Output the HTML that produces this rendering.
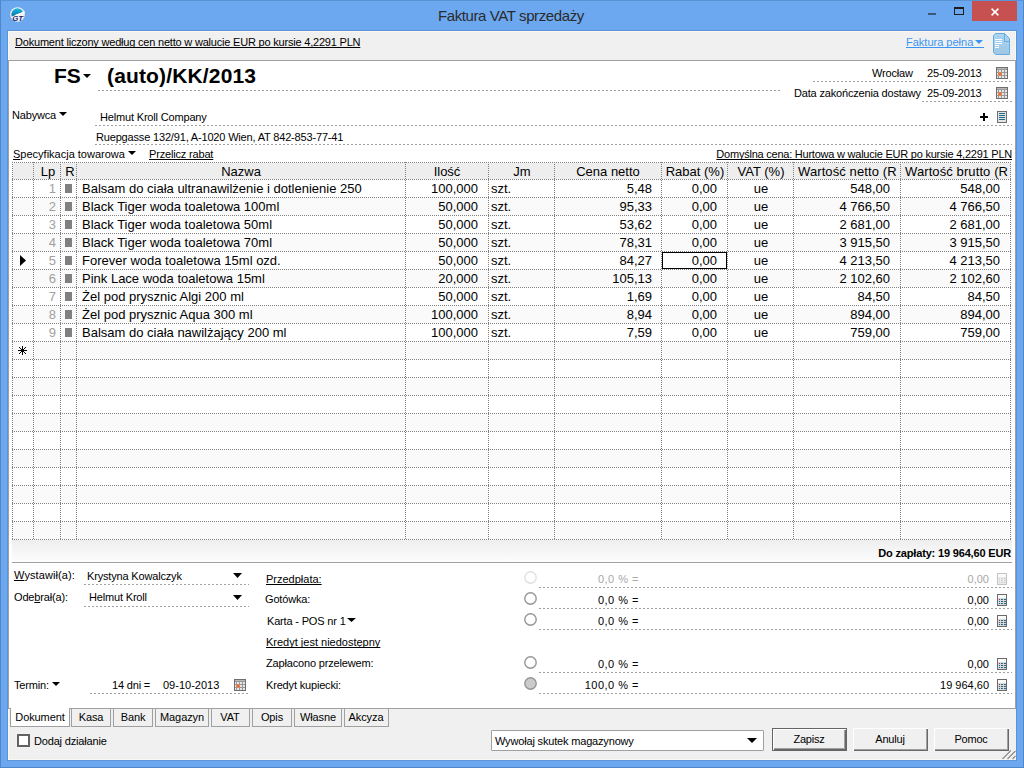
<!DOCTYPE html>
<html><head><meta charset="utf-8"><style>
*{margin:0;padding:0;box-sizing:border-box}
html,body{width:1024px;height:768px;overflow:hidden;background:#6ba8f0;font-family:"Liberation Sans",sans-serif;position:relative;color:#000}
.a{position:absolute;white-space:nowrap}
.s{letter-spacing:-0.17px}
.u{text-decoration:underline;text-decoration-skip-ink:none}
svg{display:block}
</style></head><body>
<div class="a" style="left:0px;top:0px;width:1024px;height:768px;border:1px solid #4f87c8;border-top-color:#5a92d6;"></div>
<div class="a " style="left:438px;top:8px;font-size:15px;line-height:15px;color:#2b2b2b;letter-spacing:-0.4px">Faktura VAT sprzedaży</div>
<svg class="a" style="left:10px;top:7px" width="16" height="15" viewBox="0 0 16 15"><defs><linearGradient id="ig" x1="0" y1="0" x2="0" y2="1"><stop offset="0" stop-color="#1cbce4"/><stop offset="1" stop-color="#0a6fa8"/></linearGradient></defs><circle cx="7.5" cy="7.5" r="7.3" fill="#f6f3ee"/><path d="M1.8 9.5 A5.8 5.8 0 0 1 13 5.2 L5 8.2 Z" fill="url(#ig)"/><path d="M5.5 8.3 L15 4.8" stroke="#fff" stroke-width="1.2"/><text x="2.2" y="13.6" font-family="Liberation Sans" font-weight="bold" font-style="italic" font-size="7.8" fill="#15237a">GT</text></svg>
<div class="a" style="left:928px;top:13px;width:8px;height:2px;background:#3d5878;"></div>
<div class="a" style="left:954px;top:7px;width:10px;height:8px;border:1px solid #1c1c1c;border-top-width:2px;"></div>
<div class="a" style="left:972px;top:1px;width:45px;height:20px;background:#c75050;"></div>
<svg class="a" style="left:991px;top:8px" width="8" height="8"><path d="M0.6 0.6 L7.4 7.4 M7.4 0.6 L0.6 7.4" stroke="#fff" stroke-width="1.5"/></svg>
<div class="a" style="left:7px;top:30px;width:1010px;height:731px;background:#f0f0f0;border:1px solid #5b94d8;"></div>
<div class="a" style="left:8px;top:31px;width:1008px;height:1px;background:#fbf8f3;"></div>
<div class="a" style="left:8px;top:31px;width:1px;height:30px;background:#fbf8f3;"></div>
<div class="a" style="left:1015px;top:31px;width:1px;height:30px;background:#fbf8f3;"></div>
<div class="a" style="left:8px;top:60px;width:1008px;height:1px;background:#a0a0a0;"></div>
<div class="a" style="left:8px;top:61px;width:1008px;height:647px;background:#fff;border-left:1px solid #a0a0a0;border-right:1px solid #a0a0a0;"></div>
<div class="a" style="left:8px;top:708px;width:1px;height:51px;background:#fbf8f3;"></div>
<div class="a" style="left:8px;top:759px;width:1008px;height:1px;background:#fbf8f3;"></div>
<div class="a u" style="left:15px;top:37px;font-size:11px;line-height:11px;letter-spacing:-0.2px">Dokument liczony według cen netto w walucie EUR po kursie 4,2291 PLN</div>
<div class="a " style="left:906px;top:37px;font-size:11px;line-height:11px;color:#3a95f2;letter-spacing:-0.0px">Faktura pełna</div>
<svg class="a" style="left:975px;top:40px" width="8" height="4"><polygon points="0,0 8,0 4.0,4" fill="#3a95f2"/></svg>
<div class="a" style="left:906px;top:47px;width:78px;height:1px;background:#3a95f2;"></div>
<svg class="a" style="left:993px;top:33px" width="17" height="22" viewBox="0 0 17 22"><defs><linearGradient id="dg" x1="0" y1="0" x2="0" y2="1"><stop offset="0" stop-color="#a8d6f4"/><stop offset="1" stop-color="#a0c6e2"/></linearGradient></defs><path d="M2.5 0.5 H11.5 L16.5 5.5 V21.5 H2.5 L0.5 19.5 V2.5 Z" fill="url(#dg)" stroke="#68ace0" stroke-width="1"/><path d="M11.5 0.5 V8.5 H16.5" fill="none" stroke="#68ace0" stroke-width="1"/><g fill="#fff"><rect x="2" y="6" width="7" height="1"/><rect x="2" y="8" width="7" height="1"/><rect x="2" y="10" width="7" height="1"/><rect x="2" y="12" width="4" height="1"/><rect x="2" y="14" width="4" height="1"/></g></svg>
<div class="a " style="left:54px;top:65px;font-size:21px;line-height:21px;font-weight:bold">FS</div>
<svg class="a" style="left:83px;top:74px" width="8" height="4"><polygon points="0,0 8,0 4.0,4" fill="#000"/></svg>
<div class="a " style="left:107px;top:65px;font-size:21px;line-height:21px;font-weight:bold;letter-spacing:0.15px">(auto)/KK/2013</div>
<svg class="a" style="left:98px;top:90px" width="683" height="1"><line x1="0" y1="0.5" x2="683" y2="0.5" stroke="#a0a0a0" stroke-width="1" stroke-dasharray="2 2"/></svg>
<div class="a s" style="left:872px;top:68px;font-size:11px;line-height:11px;">Wrocław</div>
<div class="a s" style="left:927px;top:68px;font-size:11px;line-height:11px;">25-09-2013</div>
<svg class="a" style="left:813px;top:81px" width="199" height="1"><line x1="0" y1="0.5" x2="199" y2="0.5" stroke="#a0a0a0" stroke-width="1" stroke-dasharray="2 2"/></svg>
<div class="a s" style="left:794px;top:88px;font-size:11px;line-height:11px;">Data zakończenia dostawy</div>
<div class="a s" style="left:927px;top:88px;font-size:11px;line-height:11px;">25-09-2013</div>
<svg class="a" style="left:922px;top:101px" width="90" height="1"><line x1="0" y1="0.5" x2="90" y2="0.5" stroke="#a0a0a0" stroke-width="1" stroke-dasharray="2 2"/></svg>
<svg class="a" style="left:996px;top:67px" width="12" height="12" viewBox="0 0 12 12"><rect x="0" y="0" width="12" height="12" fill="#6e6e6e"/><rect x="1" y="1" width="10" height="10" fill="#989898"/><rect x="1" y="1" width="10" height="1" fill="#b8b8b8"/><rect x="1" y="3" width="1" height="2" fill="#e6e6e6"/><rect x="3" y="3" width="2" height="2" fill="#e6e6e6"/><rect x="6" y="3" width="2" height="2" fill="#e6e6e6"/><rect x="9" y="3" width="2" height="2" fill="#e6e6e6"/><rect x="1" y="6" width="1" height="2" fill="#e6e6e6"/><rect x="3" y="6" width="2" height="2" fill="#e6e6e6"/><rect x="6" y="6" width="2" height="2" fill="#e6e6e6"/><rect x="9" y="6" width="2" height="2" fill="#e6e6e6"/><rect x="1" y="9" width="1" height="2" fill="#e6e6e6"/><rect x="3" y="9" width="2" height="2" fill="#e6e6e6"/><rect x="6" y="9" width="2" height="2" fill="#e6e6e6"/><rect x="9" y="9" width="2" height="2" fill="#e6e6e6"/><rect x="2" y="5" width="4" height="4" fill="#d08a6c"/><rect x="3" y="6" width="2" height="2" fill="#f26a30"/></svg>
<svg class="a" style="left:996px;top:87px" width="12" height="12" viewBox="0 0 12 12"><rect x="0" y="0" width="12" height="12" fill="#6e6e6e"/><rect x="1" y="1" width="10" height="10" fill="#989898"/><rect x="1" y="1" width="10" height="1" fill="#b8b8b8"/><rect x="1" y="3" width="1" height="2" fill="#e6e6e6"/><rect x="3" y="3" width="2" height="2" fill="#e6e6e6"/><rect x="6" y="3" width="2" height="2" fill="#e6e6e6"/><rect x="9" y="3" width="2" height="2" fill="#e6e6e6"/><rect x="1" y="6" width="1" height="2" fill="#e6e6e6"/><rect x="3" y="6" width="2" height="2" fill="#e6e6e6"/><rect x="6" y="6" width="2" height="2" fill="#e6e6e6"/><rect x="9" y="6" width="2" height="2" fill="#e6e6e6"/><rect x="1" y="9" width="1" height="2" fill="#e6e6e6"/><rect x="3" y="9" width="2" height="2" fill="#e6e6e6"/><rect x="6" y="9" width="2" height="2" fill="#e6e6e6"/><rect x="9" y="9" width="2" height="2" fill="#e6e6e6"/><rect x="2" y="5" width="4" height="4" fill="#d08a6c"/><rect x="3" y="6" width="2" height="2" fill="#f26a30"/></svg>
<div class="a s" style="left:12px;top:110px;font-size:11px;line-height:11px;">Nabywca</div>
<svg class="a" style="left:59px;top:112px" width="8" height="4"><polygon points="0,0 8,0 4.0,4" fill="#000"/></svg>
<div class="a s" style="left:100px;top:112px;font-size:11px;line-height:11px;">Helmut Kroll Company</div>
<svg class="a" style="left:95px;top:125px" width="917" height="1"><line x1="0" y1="0.5" x2="917" y2="0.5" stroke="#a0a0a0" stroke-width="1" stroke-dasharray="2 2"/></svg>
<div class="a s" style="left:96px;top:132px;font-size:11px;line-height:11px;">Ruepgasse 132/91, A-1020 Wien, AT 842-853-77-41</div>
<svg class="a" style="left:95px;top:144px" width="917" height="1"><line x1="0" y1="0.5" x2="917" y2="0.5" stroke="#a0a0a0" stroke-width="1" stroke-dasharray="2 2"/></svg>
<div class="a" style="left:980px;top:116px;width:8px;height:2px;background:#000;"></div>
<div class="a" style="left:983px;top:113px;width:2px;height:8px;background:#000;"></div>
<svg class="a" style="left:997px;top:111px" width="10" height="12" viewBox="0 0 10 12"><rect x="0.5" y="0.5" width="9" height="11" fill="#e4e4e4" stroke="#6e6e6e"/><g fill="#1f6a8c"><rect x="2" y="2" width="6" height="1"/><rect x="2" y="4" width="6" height="1"/><rect x="2" y="6" width="6" height="1"/><rect x="2" y="8" width="6" height="1"/></g></svg>
<div class="a " style="left:13px;top:149px;font-size:11px;line-height:11px;letter-spacing:0px"><span class="u">S</span>pecyfikacja towarowa</div>
<svg class="a" style="left:128px;top:151px" width="8" height="4"><polygon points="0,0 8,0 4.0,4" fill="#000"/></svg>
<div class="a s u" style="left:149px;top:149px;font-size:11px;line-height:11px;">Przelicz rabat</div>
<div class="a u" style="right:12px;top:149px;font-size:11px;line-height:11px;text-align:right;letter-spacing:-0.23px">Domyślna cena: Hurtowa w walucie EUR po kursie 4,2291 PLN</div>
<div class="a" style="left:13px;top:163px;width:998px;height:16px;background:#eeeeee;"></div>
<div class="a" style="left:13px;top:198px;width:998px;height:17px;background:#fafafa;"></div>
<div class="a" style="left:13px;top:234px;width:998px;height:17px;background:#fafafa;"></div>
<div class="a" style="left:13px;top:270px;width:998px;height:17px;background:#fafafa;"></div>
<div class="a" style="left:13px;top:306px;width:998px;height:17px;background:#fafafa;"></div>
<div class="a" style="left:13px;top:342px;width:998px;height:17px;background:#fafafa;"></div>
<div class="a" style="left:13px;top:378px;width:998px;height:17px;background:#fafafa;"></div>
<div class="a" style="left:13px;top:414px;width:998px;height:17px;background:#fafafa;"></div>
<div class="a" style="left:13px;top:450px;width:998px;height:17px;background:#fafafa;"></div>
<div class="a" style="left:13px;top:486px;width:998px;height:17px;background:#fafafa;"></div>
<div class="a" style="left:13px;top:522px;width:998px;height:17px;background:#fafafa;"></div>
<svg class="a" style="left:12px;top:179px" width="999" height="1"><line x1="0" y1="0.5" x2="999" y2="0.5" stroke="#808080" stroke-width="1" stroke-dasharray="1 1"/></svg>
<svg class="a" style="left:12px;top:197px" width="999" height="1"><line x1="0" y1="0.5" x2="999" y2="0.5" stroke="#808080" stroke-width="1" stroke-dasharray="1 1"/></svg>
<svg class="a" style="left:12px;top:215px" width="999" height="1"><line x1="0" y1="0.5" x2="999" y2="0.5" stroke="#808080" stroke-width="1" stroke-dasharray="1 1"/></svg>
<svg class="a" style="left:12px;top:233px" width="999" height="1"><line x1="0" y1="0.5" x2="999" y2="0.5" stroke="#808080" stroke-width="1" stroke-dasharray="1 1"/></svg>
<svg class="a" style="left:12px;top:251px" width="999" height="1"><line x1="0" y1="0.5" x2="999" y2="0.5" stroke="#808080" stroke-width="1" stroke-dasharray="1 1"/></svg>
<svg class="a" style="left:12px;top:269px" width="999" height="1"><line x1="0" y1="0.5" x2="999" y2="0.5" stroke="#808080" stroke-width="1" stroke-dasharray="1 1"/></svg>
<svg class="a" style="left:12px;top:287px" width="999" height="1"><line x1="0" y1="0.5" x2="999" y2="0.5" stroke="#808080" stroke-width="1" stroke-dasharray="1 1"/></svg>
<svg class="a" style="left:12px;top:305px" width="999" height="1"><line x1="0" y1="0.5" x2="999" y2="0.5" stroke="#808080" stroke-width="1" stroke-dasharray="1 1"/></svg>
<svg class="a" style="left:12px;top:323px" width="999" height="1"><line x1="0" y1="0.5" x2="999" y2="0.5" stroke="#808080" stroke-width="1" stroke-dasharray="1 1"/></svg>
<svg class="a" style="left:12px;top:341px" width="999" height="1"><line x1="0" y1="0.5" x2="999" y2="0.5" stroke="#808080" stroke-width="1" stroke-dasharray="1 1"/></svg>
<svg class="a" style="left:12px;top:359px" width="999" height="1"><line x1="0" y1="0.5" x2="999" y2="0.5" stroke="#808080" stroke-width="1" stroke-dasharray="1 1"/></svg>
<svg class="a" style="left:12px;top:377px" width="999" height="1"><line x1="0" y1="0.5" x2="999" y2="0.5" stroke="#808080" stroke-width="1" stroke-dasharray="1 1"/></svg>
<svg class="a" style="left:12px;top:395px" width="999" height="1"><line x1="0" y1="0.5" x2="999" y2="0.5" stroke="#808080" stroke-width="1" stroke-dasharray="1 1"/></svg>
<svg class="a" style="left:12px;top:413px" width="999" height="1"><line x1="0" y1="0.5" x2="999" y2="0.5" stroke="#808080" stroke-width="1" stroke-dasharray="1 1"/></svg>
<svg class="a" style="left:12px;top:431px" width="999" height="1"><line x1="0" y1="0.5" x2="999" y2="0.5" stroke="#808080" stroke-width="1" stroke-dasharray="1 1"/></svg>
<svg class="a" style="left:12px;top:449px" width="999" height="1"><line x1="0" y1="0.5" x2="999" y2="0.5" stroke="#808080" stroke-width="1" stroke-dasharray="1 1"/></svg>
<svg class="a" style="left:12px;top:467px" width="999" height="1"><line x1="0" y1="0.5" x2="999" y2="0.5" stroke="#808080" stroke-width="1" stroke-dasharray="1 1"/></svg>
<svg class="a" style="left:12px;top:485px" width="999" height="1"><line x1="0" y1="0.5" x2="999" y2="0.5" stroke="#808080" stroke-width="1" stroke-dasharray="1 1"/></svg>
<svg class="a" style="left:12px;top:503px" width="999" height="1"><line x1="0" y1="0.5" x2="999" y2="0.5" stroke="#808080" stroke-width="1" stroke-dasharray="1 1"/></svg>
<svg class="a" style="left:12px;top:521px" width="999" height="1"><line x1="0" y1="0.5" x2="999" y2="0.5" stroke="#808080" stroke-width="1" stroke-dasharray="1 1"/></svg>
<svg class="a" style="left:12px;top:539px" width="999" height="1"><line x1="0" y1="0.5" x2="999" y2="0.5" stroke="#808080" stroke-width="1" stroke-dasharray="1 1"/></svg>
<svg class="a" style="left:12px;top:162px" width="999" height="1"><line x1="0" y1="0.5" x2="999" y2="0.5" stroke="#808080" stroke-width="1" stroke-dasharray="1 1"/></svg>
<svg class="a" style="left:12px;top:162px" width="1" height="378"><line x1="0.5" y1="0" x2="0.5" y2="378" stroke="#808080" stroke-width="1" stroke-dasharray="1 1"/></svg>
<svg class="a" style="left:33px;top:162px" width="1" height="378"><line x1="0.5" y1="0" x2="0.5" y2="378" stroke="#808080" stroke-width="1" stroke-dasharray="1 1"/></svg>
<svg class="a" style="left:60px;top:162px" width="1" height="378"><line x1="0.5" y1="0" x2="0.5" y2="378" stroke="#808080" stroke-width="1" stroke-dasharray="1 1"/></svg>
<svg class="a" style="left:76px;top:162px" width="1" height="378"><line x1="0.5" y1="0" x2="0.5" y2="378" stroke="#808080" stroke-width="1" stroke-dasharray="1 1"/></svg>
<svg class="a" style="left:405px;top:162px" width="1" height="378"><line x1="0.5" y1="0" x2="0.5" y2="378" stroke="#808080" stroke-width="1" stroke-dasharray="1 1"/></svg>
<svg class="a" style="left:488px;top:162px" width="1" height="378"><line x1="0.5" y1="0" x2="0.5" y2="378" stroke="#808080" stroke-width="1" stroke-dasharray="1 1"/></svg>
<svg class="a" style="left:554px;top:162px" width="1" height="378"><line x1="0.5" y1="0" x2="0.5" y2="378" stroke="#808080" stroke-width="1" stroke-dasharray="1 1"/></svg>
<svg class="a" style="left:661px;top:162px" width="1" height="378"><line x1="0.5" y1="0" x2="0.5" y2="378" stroke="#808080" stroke-width="1" stroke-dasharray="1 1"/></svg>
<svg class="a" style="left:727px;top:162px" width="1" height="378"><line x1="0.5" y1="0" x2="0.5" y2="378" stroke="#808080" stroke-width="1" stroke-dasharray="1 1"/></svg>
<svg class="a" style="left:793px;top:162px" width="1" height="378"><line x1="0.5" y1="0" x2="0.5" y2="378" stroke="#808080" stroke-width="1" stroke-dasharray="1 1"/></svg>
<svg class="a" style="left:900px;top:162px" width="1" height="378"><line x1="0.5" y1="0" x2="0.5" y2="378" stroke="#808080" stroke-width="1" stroke-dasharray="1 1"/></svg>
<svg class="a" style="left:1010px;top:162px" width="1" height="378"><line x1="0.5" y1="0" x2="0.5" y2="378" stroke="#808080" stroke-width="1" stroke-dasharray="1 1"/></svg>
<div class="a " style="left:-152px;width:400px;top:165px;font-size:13px;line-height:13px;text-align:center;">Lp</div>
<div class="a " style="left:-130px;width:400px;top:165px;font-size:13px;line-height:13px;text-align:center;">R</div>
<div class="a " style="left:41px;width:400px;top:165px;font-size:13px;line-height:13px;text-align:center;">Nazwa</div>
<div class="a " style="left:247px;width:400px;top:165px;font-size:13px;line-height:13px;text-align:center;">Ilość</div>
<div class="a " style="left:322px;width:400px;top:165px;font-size:13px;line-height:13px;text-align:center;">Jm</div>
<div class="a " style="left:408px;width:400px;top:165px;font-size:13px;line-height:13px;text-align:center;">Cena netto</div>
<div class="a " style="left:495px;width:400px;top:165px;font-size:13px;line-height:13px;text-align:center;">Rabat (%)</div>
<div class="a " style="left:561px;width:400px;top:165px;font-size:13px;line-height:13px;text-align:center;">VAT (%)</div>
<div class="a " style="left:798px;top:165px;font-size:13px;line-height:13px;letter-spacing:0.1px">Wartość netto (R</div>
<div class="a " style="left:905px;top:165px;font-size:13px;line-height:13px;letter-spacing:0.1px">Wartość brutto (R</div>
<div class="a " style="right:968px;top:182px;font-size:13px;line-height:13px;text-align:right;color:#a0a0a0">1</div>
<div class="a" style="left:65px;top:184px;width:7px;height:9px;background:#808080;"></div>
<div class="a " style="left:82px;top:182px;font-size:13px;line-height:13px;">Balsam do ciała ultranawilżenie i dotlenienie 250</div>
<div class="a " style="right:546px;top:182px;font-size:13px;line-height:13px;text-align:right;">100,000</div>
<div class="a " style="left:491px;top:182px;font-size:13px;line-height:13px;">szt.</div>
<div class="a " style="right:372px;top:182px;font-size:13px;line-height:13px;text-align:right;">5,48</div>
<div class="a " style="right:307px;top:182px;font-size:13px;line-height:13px;text-align:right;">0,00</div>
<div class="a " style="left:561px;width:400px;top:182px;font-size:13px;line-height:13px;text-align:center;">ue</div>
<div class="a " style="right:134px;top:182px;font-size:13px;line-height:13px;text-align:right;">548,00</div>
<div class="a " style="right:24px;top:182px;font-size:13px;line-height:13px;text-align:right;">548,00</div>
<div class="a " style="right:968px;top:200px;font-size:13px;line-height:13px;text-align:right;color:#a0a0a0">2</div>
<div class="a" style="left:65px;top:202px;width:7px;height:9px;background:#808080;"></div>
<div class="a " style="left:82px;top:200px;font-size:13px;line-height:13px;">Black Tiger woda toaletowa 100ml</div>
<div class="a " style="right:546px;top:200px;font-size:13px;line-height:13px;text-align:right;">50,000</div>
<div class="a " style="left:491px;top:200px;font-size:13px;line-height:13px;">szt.</div>
<div class="a " style="right:372px;top:200px;font-size:13px;line-height:13px;text-align:right;">95,33</div>
<div class="a " style="right:307px;top:200px;font-size:13px;line-height:13px;text-align:right;">0,00</div>
<div class="a " style="left:561px;width:400px;top:200px;font-size:13px;line-height:13px;text-align:center;">ue</div>
<div class="a " style="right:134px;top:200px;font-size:13px;line-height:13px;text-align:right;">4 766,50</div>
<div class="a " style="right:24px;top:200px;font-size:13px;line-height:13px;text-align:right;">4 766,50</div>
<div class="a " style="right:968px;top:218px;font-size:13px;line-height:13px;text-align:right;color:#a0a0a0">3</div>
<div class="a" style="left:65px;top:220px;width:7px;height:9px;background:#808080;"></div>
<div class="a " style="left:82px;top:218px;font-size:13px;line-height:13px;">Black Tiger woda toaletowa 50ml</div>
<div class="a " style="right:546px;top:218px;font-size:13px;line-height:13px;text-align:right;">50,000</div>
<div class="a " style="left:491px;top:218px;font-size:13px;line-height:13px;">szt.</div>
<div class="a " style="right:372px;top:218px;font-size:13px;line-height:13px;text-align:right;">53,62</div>
<div class="a " style="right:307px;top:218px;font-size:13px;line-height:13px;text-align:right;">0,00</div>
<div class="a " style="left:561px;width:400px;top:218px;font-size:13px;line-height:13px;text-align:center;">ue</div>
<div class="a " style="right:134px;top:218px;font-size:13px;line-height:13px;text-align:right;">2 681,00</div>
<div class="a " style="right:24px;top:218px;font-size:13px;line-height:13px;text-align:right;">2 681,00</div>
<div class="a " style="right:968px;top:236px;font-size:13px;line-height:13px;text-align:right;color:#a0a0a0">4</div>
<div class="a" style="left:65px;top:238px;width:7px;height:9px;background:#808080;"></div>
<div class="a " style="left:82px;top:236px;font-size:13px;line-height:13px;">Black Tiger woda toaletowa 70ml</div>
<div class="a " style="right:546px;top:236px;font-size:13px;line-height:13px;text-align:right;">50,000</div>
<div class="a " style="left:491px;top:236px;font-size:13px;line-height:13px;">szt.</div>
<div class="a " style="right:372px;top:236px;font-size:13px;line-height:13px;text-align:right;">78,31</div>
<div class="a " style="right:307px;top:236px;font-size:13px;line-height:13px;text-align:right;">0,00</div>
<div class="a " style="left:561px;width:400px;top:236px;font-size:13px;line-height:13px;text-align:center;">ue</div>
<div class="a " style="right:134px;top:236px;font-size:13px;line-height:13px;text-align:right;">3 915,50</div>
<div class="a " style="right:24px;top:236px;font-size:13px;line-height:13px;text-align:right;">3 915,50</div>
<div class="a " style="right:968px;top:254px;font-size:13px;line-height:13px;text-align:right;color:#a0a0a0">5</div>
<div class="a" style="left:65px;top:256px;width:7px;height:9px;background:#808080;"></div>
<div class="a " style="left:82px;top:254px;font-size:13px;line-height:13px;">Forever woda toaletowa 15ml ozd.</div>
<div class="a " style="right:546px;top:254px;font-size:13px;line-height:13px;text-align:right;">50,000</div>
<div class="a " style="left:491px;top:254px;font-size:13px;line-height:13px;">szt.</div>
<div class="a " style="right:372px;top:254px;font-size:13px;line-height:13px;text-align:right;">84,27</div>
<div class="a " style="right:307px;top:254px;font-size:13px;line-height:13px;text-align:right;">0,00</div>
<div class="a " style="left:561px;width:400px;top:254px;font-size:13px;line-height:13px;text-align:center;">ue</div>
<div class="a " style="right:134px;top:254px;font-size:13px;line-height:13px;text-align:right;">4 213,50</div>
<div class="a " style="right:24px;top:254px;font-size:13px;line-height:13px;text-align:right;">4 213,50</div>
<div class="a " style="right:968px;top:272px;font-size:13px;line-height:13px;text-align:right;color:#a0a0a0">6</div>
<div class="a" style="left:65px;top:274px;width:7px;height:9px;background:#808080;"></div>
<div class="a " style="left:82px;top:272px;font-size:13px;line-height:13px;">Pink Lace woda toaletowa 15ml</div>
<div class="a " style="right:546px;top:272px;font-size:13px;line-height:13px;text-align:right;">20,000</div>
<div class="a " style="left:491px;top:272px;font-size:13px;line-height:13px;">szt.</div>
<div class="a " style="right:372px;top:272px;font-size:13px;line-height:13px;text-align:right;">105,13</div>
<div class="a " style="right:307px;top:272px;font-size:13px;line-height:13px;text-align:right;">0,00</div>
<div class="a " style="left:561px;width:400px;top:272px;font-size:13px;line-height:13px;text-align:center;">ue</div>
<div class="a " style="right:134px;top:272px;font-size:13px;line-height:13px;text-align:right;">2 102,60</div>
<div class="a " style="right:24px;top:272px;font-size:13px;line-height:13px;text-align:right;">2 102,60</div>
<div class="a " style="right:968px;top:290px;font-size:13px;line-height:13px;text-align:right;color:#a0a0a0">7</div>
<div class="a" style="left:65px;top:292px;width:7px;height:9px;background:#808080;"></div>
<div class="a " style="left:82px;top:290px;font-size:13px;line-height:13px;">Żel pod prysznic Algi 200 ml</div>
<div class="a " style="right:546px;top:290px;font-size:13px;line-height:13px;text-align:right;">50,000</div>
<div class="a " style="left:491px;top:290px;font-size:13px;line-height:13px;">szt.</div>
<div class="a " style="right:372px;top:290px;font-size:13px;line-height:13px;text-align:right;">1,69</div>
<div class="a " style="right:307px;top:290px;font-size:13px;line-height:13px;text-align:right;">0,00</div>
<div class="a " style="left:561px;width:400px;top:290px;font-size:13px;line-height:13px;text-align:center;">ue</div>
<div class="a " style="right:134px;top:290px;font-size:13px;line-height:13px;text-align:right;">84,50</div>
<div class="a " style="right:24px;top:290px;font-size:13px;line-height:13px;text-align:right;">84,50</div>
<div class="a " style="right:968px;top:308px;font-size:13px;line-height:13px;text-align:right;color:#a0a0a0">8</div>
<div class="a" style="left:65px;top:310px;width:7px;height:9px;background:#808080;"></div>
<div class="a " style="left:82px;top:308px;font-size:13px;line-height:13px;">Żel pod prysznic Aqua 300 ml</div>
<div class="a " style="right:546px;top:308px;font-size:13px;line-height:13px;text-align:right;">100,000</div>
<div class="a " style="left:491px;top:308px;font-size:13px;line-height:13px;">szt.</div>
<div class="a " style="right:372px;top:308px;font-size:13px;line-height:13px;text-align:right;">8,94</div>
<div class="a " style="right:307px;top:308px;font-size:13px;line-height:13px;text-align:right;">0,00</div>
<div class="a " style="left:561px;width:400px;top:308px;font-size:13px;line-height:13px;text-align:center;">ue</div>
<div class="a " style="right:134px;top:308px;font-size:13px;line-height:13px;text-align:right;">894,00</div>
<div class="a " style="right:24px;top:308px;font-size:13px;line-height:13px;text-align:right;">894,00</div>
<div class="a " style="right:968px;top:326px;font-size:13px;line-height:13px;text-align:right;color:#a0a0a0">9</div>
<div class="a" style="left:65px;top:328px;width:7px;height:9px;background:#808080;"></div>
<div class="a " style="left:82px;top:326px;font-size:13px;line-height:13px;">Balsam do ciała nawilżający 200 ml</div>
<div class="a " style="right:546px;top:326px;font-size:13px;line-height:13px;text-align:right;">100,000</div>
<div class="a " style="left:491px;top:326px;font-size:13px;line-height:13px;">szt.</div>
<div class="a " style="right:372px;top:326px;font-size:13px;line-height:13px;text-align:right;">7,59</div>
<div class="a " style="right:307px;top:326px;font-size:13px;line-height:13px;text-align:right;">0,00</div>
<div class="a " style="left:561px;width:400px;top:326px;font-size:13px;line-height:13px;text-align:center;">ue</div>
<div class="a " style="right:134px;top:326px;font-size:13px;line-height:13px;text-align:right;">759,00</div>
<div class="a " style="right:24px;top:326px;font-size:13px;line-height:13px;text-align:right;">759,00</div>
<svg class="a" style="left:20px;top:255px" width="6" height="11"><polygon points="0,0 6,5.5 0,11" fill="#000"/></svg>
<div class="a" style="left:662px;top:252px;width:65px;height:17px;border:1px solid #000;"></div>
<svg class="a" style="left:18px;top:346px" width="9" height="9"><g fill="#000"><rect x="0" y="4" width="9" height="1"/><rect x="4" y="0" width="1" height="9"/><rect x="3" y="3" width="3" height="3"/><rect x="1" y="1" width="1" height="1"/><rect x="2" y="2" width="1" height="1"/><rect x="7" y="1" width="1" height="1"/><rect x="6" y="2" width="1" height="1"/><rect x="1" y="7" width="1" height="1"/><rect x="2" y="6" width="1" height="1"/><rect x="7" y="7" width="1" height="1"/><rect x="6" y="6" width="1" height="1"/></g></svg>
<div class="a" style="left:12px;top:540px;width:1000px;height:22px;background:linear-gradient(#eeeeee,#fdfdfd)"></div>
<div class="a" style="left:12px;top:562px;width:1000px;height:1px;background:#a0a0a0;"></div>
<div class="a s" style="right:13px;top:548px;font-size:11px;line-height:11px;text-align:right;font-weight:bold">Do zapłaty: 19 964,60 EUR</div>
<div class="a" style="left:8px;top:708px;width:1008px;height:1px;background:#a0a0a0;"></div>
<div class="a " style="left:14px;top:570px;font-size:11px;line-height:11px;letter-spacing:0.1px"><span class="u">W</span>ystawił(a):</div>
<div class="a s" style="left:87px;top:571px;font-size:11px;line-height:11px;">Krystyna Kowalczyk</div>
<svg class="a" style="left:233px;top:573px" width="9" height="5"><polygon points="0,0 9,0 4.5,5" fill="#000"/></svg>
<svg class="a" style="left:84px;top:584px" width="165" height="1"><line x1="0" y1="0.5" x2="165" y2="0.5" stroke="#a0a0a0" stroke-width="1" stroke-dasharray="2 2"/></svg>
<div class="a s" style="left:14px;top:592px;font-size:11px;line-height:11px;">Ode<span class="u">b</span>rał(a):</div>
<div class="a s" style="left:89px;top:592px;font-size:11px;line-height:11px;">Helmut Kroll</div>
<svg class="a" style="left:233px;top:595px" width="9" height="5"><polygon points="0,0 9,0 4.5,5" fill="#000"/></svg>
<svg class="a" style="left:84px;top:606px" width="165" height="1"><line x1="0" y1="0.5" x2="165" y2="0.5" stroke="#a0a0a0" stroke-width="1" stroke-dasharray="2 2"/></svg>
<div class="a s" style="left:14px;top:680px;font-size:11px;line-height:11px;">Termin:</div>
<svg class="a" style="left:52px;top:682px" width="8" height="4"><polygon points="0,0 8,0 4.0,4" fill="#000"/></svg>
<div class="a s" style="left:112px;top:680px;font-size:11px;line-height:11px;">14 dni =</div>
<div class="a " style="left:163px;top:680px;font-size:11px;line-height:11px;letter-spacing:0px">09-10-2013</div>
<svg class="a" style="left:234px;top:679px" width="12" height="12" viewBox="0 0 12 12"><rect x="0" y="0" width="12" height="12" fill="#6e6e6e"/><rect x="1" y="1" width="10" height="10" fill="#989898"/><rect x="1" y="1" width="10" height="1" fill="#b8b8b8"/><rect x="1" y="3" width="1" height="2" fill="#e6e6e6"/><rect x="3" y="3" width="2" height="2" fill="#e6e6e6"/><rect x="6" y="3" width="2" height="2" fill="#e6e6e6"/><rect x="9" y="3" width="2" height="2" fill="#e6e6e6"/><rect x="1" y="6" width="1" height="2" fill="#e6e6e6"/><rect x="3" y="6" width="2" height="2" fill="#e6e6e6"/><rect x="6" y="6" width="2" height="2" fill="#e6e6e6"/><rect x="9" y="6" width="2" height="2" fill="#e6e6e6"/><rect x="1" y="9" width="1" height="2" fill="#e6e6e6"/><rect x="3" y="9" width="2" height="2" fill="#e6e6e6"/><rect x="6" y="9" width="2" height="2" fill="#e6e6e6"/><rect x="9" y="9" width="2" height="2" fill="#e6e6e6"/><rect x="2" y="5" width="4" height="4" fill="#d08a6c"/><rect x="3" y="6" width="2" height="2" fill="#f26a30"/></svg>
<svg class="a" style="left:90px;top:693px" width="158" height="1"><line x1="0" y1="0.5" x2="158" y2="0.5" stroke="#a0a0a0" stroke-width="1" stroke-dasharray="2 2"/></svg>
<div class="a u" style="left:266px;top:574px;font-size:11px;line-height:11px;">Przedpłata:</div>
<div class="a s" style="left:265px;top:594px;font-size:11px;line-height:11px;">Gotówka:</div>
<div class="a s" style="left:267px;top:616px;font-size:11px;line-height:11px;">Karta - POS nr 1</div>
<svg class="a" style="left:347px;top:618px" width="9" height="4"><polygon points="0,0 9,0 4.5,4" fill="#000"/></svg>
<div class="a u" style="left:266px;top:637px;font-size:11px;line-height:11px;">Kredyt jest niedostępny</div>
<div class="a s" style="left:266px;top:658px;font-size:11px;line-height:11px;">Zapłacono przelewem:</div>
<div class="a s" style="left:266px;top:680px;font-size:11px;line-height:11px;">Kredyt kupiecki:</div>
<svg class="a" style="left:524px;top:571px" width="14" height="14"><circle cx="6.5" cy="6.5" r="5.7" fill="#fff" stroke="#e0e0e0" stroke-width="1.4"/></svg>
<div class="a " style="right:385px;top:574px;font-size:11px;line-height:11px;text-align:right;color:#a8a8a8;letter-spacing:0.5px">0,0 % =</div>
<div class="a " style="right:35px;top:574px;font-size:11px;line-height:11px;text-align:right;color:#a8a8a8">0,00</div>
<svg class="a" style="left:997px;top:573px" width="10" height="12" viewBox="0 0 10 12"><rect x="0.5" y="0.5" width="9" height="11" fill="#ececec" stroke="#c4c4c4"/><rect x="1" y="1" width="8" height="3" fill="#fafafa"/><rect x="2" y="5" width="1" height="1" fill="#d0d0d0"/><rect x="4" y="5" width="2" height="1" fill="#d0d0d0"/><rect x="7" y="5" width="2" height="1" fill="#d0d0d0"/><rect x="2" y="7" width="1" height="1" fill="#d0d0d0"/><rect x="4" y="7" width="2" height="1" fill="#d0d0d0"/><rect x="7" y="7" width="2" height="1" fill="#d0d0d0"/><rect x="2" y="9" width="1" height="1" fill="#d0d0d0"/><rect x="4" y="9" width="2" height="1" fill="#d0d0d0"/><rect x="7" y="9" width="2" height="1" fill="#d0d0d0"/></svg>
<svg class="a" style="left:539px;top:587px" width="473" height="1"><line x1="0" y1="0.5" x2="473" y2="0.5" stroke="#a0a0a0" stroke-width="1" stroke-dasharray="2 2"/></svg>
<svg class="a" style="left:524px;top:592px" width="14" height="14"><circle cx="6.5" cy="6.5" r="5.7" fill="#fff" stroke="#959595" stroke-width="1.4"/></svg>
<div class="a " style="right:385px;top:595px;font-size:11px;line-height:11px;text-align:right;color:#000;letter-spacing:0.5px">0,0 % =</div>
<div class="a " style="right:35px;top:595px;font-size:11px;line-height:11px;text-align:right;color:#000">0,00</div>
<svg class="a" style="left:997px;top:594px" width="10" height="12" viewBox="0 0 10 12"><rect x="0.5" y="0.5" width="9" height="11" fill="#d8d8d8" stroke="#6a6a6a"/><rect x="1" y="1" width="8" height="3" fill="#fafafa"/><rect x="2" y="5" width="1" height="1" fill="#e01818"/><rect x="4" y="5" width="2" height="1" fill="#1f6a8c"/><rect x="7" y="5" width="2" height="1" fill="#1f6a8c"/><rect x="2" y="7" width="1" height="1" fill="#1f6a8c"/><rect x="4" y="7" width="2" height="1" fill="#1f6a8c"/><rect x="7" y="7" width="2" height="1" fill="#1f6a8c"/><rect x="2" y="9" width="1" height="1" fill="#1f6a8c"/><rect x="4" y="9" width="2" height="1" fill="#1f6a8c"/><rect x="7" y="9" width="2" height="1" fill="#1f6a8c"/></svg>
<svg class="a" style="left:539px;top:608px" width="473" height="1"><line x1="0" y1="0.5" x2="473" y2="0.5" stroke="#a0a0a0" stroke-width="1" stroke-dasharray="2 2"/></svg>
<svg class="a" style="left:524px;top:613px" width="14" height="14"><circle cx="6.5" cy="6.5" r="5.7" fill="#fff" stroke="#959595" stroke-width="1.4"/></svg>
<div class="a " style="right:385px;top:616px;font-size:11px;line-height:11px;text-align:right;color:#000;letter-spacing:0.5px">0,0 % =</div>
<div class="a " style="right:35px;top:616px;font-size:11px;line-height:11px;text-align:right;color:#000">0,00</div>
<svg class="a" style="left:997px;top:615px" width="10" height="12" viewBox="0 0 10 12"><rect x="0.5" y="0.5" width="9" height="11" fill="#d8d8d8" stroke="#6a6a6a"/><rect x="1" y="1" width="8" height="3" fill="#fafafa"/><rect x="2" y="5" width="1" height="1" fill="#e01818"/><rect x="4" y="5" width="2" height="1" fill="#1f6a8c"/><rect x="7" y="5" width="2" height="1" fill="#1f6a8c"/><rect x="2" y="7" width="1" height="1" fill="#1f6a8c"/><rect x="4" y="7" width="2" height="1" fill="#1f6a8c"/><rect x="7" y="7" width="2" height="1" fill="#1f6a8c"/><rect x="2" y="9" width="1" height="1" fill="#1f6a8c"/><rect x="4" y="9" width="2" height="1" fill="#1f6a8c"/><rect x="7" y="9" width="2" height="1" fill="#1f6a8c"/></svg>
<svg class="a" style="left:539px;top:629px" width="473" height="1"><line x1="0" y1="0.5" x2="473" y2="0.5" stroke="#a0a0a0" stroke-width="1" stroke-dasharray="2 2"/></svg>
<svg class="a" style="left:524px;top:656px" width="14" height="14"><circle cx="6.5" cy="6.5" r="5.7" fill="#fff" stroke="#959595" stroke-width="1.4"/></svg>
<div class="a " style="right:385px;top:659px;font-size:11px;line-height:11px;text-align:right;color:#000;letter-spacing:0.5px">0,0 % =</div>
<div class="a " style="right:35px;top:659px;font-size:11px;line-height:11px;text-align:right;color:#000">0,00</div>
<svg class="a" style="left:997px;top:658px" width="10" height="12" viewBox="0 0 10 12"><rect x="0.5" y="0.5" width="9" height="11" fill="#d8d8d8" stroke="#6a6a6a"/><rect x="1" y="1" width="8" height="3" fill="#fafafa"/><rect x="2" y="5" width="1" height="1" fill="#e01818"/><rect x="4" y="5" width="2" height="1" fill="#1f6a8c"/><rect x="7" y="5" width="2" height="1" fill="#1f6a8c"/><rect x="2" y="7" width="1" height="1" fill="#1f6a8c"/><rect x="4" y="7" width="2" height="1" fill="#1f6a8c"/><rect x="7" y="7" width="2" height="1" fill="#1f6a8c"/><rect x="2" y="9" width="1" height="1" fill="#1f6a8c"/><rect x="4" y="9" width="2" height="1" fill="#1f6a8c"/><rect x="7" y="9" width="2" height="1" fill="#1f6a8c"/></svg>
<svg class="a" style="left:539px;top:672px" width="473" height="1"><line x1="0" y1="0.5" x2="473" y2="0.5" stroke="#a0a0a0" stroke-width="1" stroke-dasharray="2 2"/></svg>
<svg class="a" style="left:524px;top:677px" width="14" height="14"><circle cx="6.5" cy="6.5" r="5.7" fill="#cacaca" stroke="#959595" stroke-width="1.4"/></svg>
<div class="a " style="right:385px;top:680px;font-size:11px;line-height:11px;text-align:right;color:#000;letter-spacing:0.5px">100,0 % =</div>
<div class="a " style="right:35px;top:680px;font-size:11px;line-height:11px;text-align:right;color:#000">19 964,60</div>
<svg class="a" style="left:997px;top:679px" width="10" height="12" viewBox="0 0 10 12"><rect x="0.5" y="0.5" width="9" height="11" fill="#d8d8d8" stroke="#6a6a6a"/><rect x="1" y="1" width="8" height="3" fill="#fafafa"/><rect x="2" y="5" width="1" height="1" fill="#e01818"/><rect x="4" y="5" width="2" height="1" fill="#1f6a8c"/><rect x="7" y="5" width="2" height="1" fill="#1f6a8c"/><rect x="2" y="7" width="1" height="1" fill="#1f6a8c"/><rect x="4" y="7" width="2" height="1" fill="#1f6a8c"/><rect x="7" y="7" width="2" height="1" fill="#1f6a8c"/><rect x="2" y="9" width="1" height="1" fill="#1f6a8c"/><rect x="4" y="9" width="2" height="1" fill="#1f6a8c"/><rect x="7" y="9" width="2" height="1" fill="#1f6a8c"/></svg>
<svg class="a" style="left:539px;top:693px" width="473" height="1"><line x1="0" y1="0.5" x2="473" y2="0.5" stroke="#a0a0a0" stroke-width="1" stroke-dasharray="2 2"/></svg>
<div class="a" style="left:10px;top:708px;width:60px;height:19px;background:#fff;border:1px solid #a0a0a0;border-top:none;"></div>
<div class="a " style="left:-160px;width:400px;top:712px;font-size:11px;line-height:11px;text-align:center;letter-spacing:-0.1px">Dokument</div>
<div class="a" style="left:71px;top:709px;width:40px;height:18px;background:#f0f0f0;border:1px solid #a0a0a0;border-top:none;"></div>
<div class="a " style="left:-109px;width:400px;top:712px;font-size:11px;line-height:11px;text-align:center;letter-spacing:-0.1px">Kasa</div>
<div class="a" style="left:113px;top:709px;width:40px;height:18px;background:#f0f0f0;border:1px solid #a0a0a0;border-top:none;"></div>
<div class="a " style="left:-67px;width:400px;top:712px;font-size:11px;line-height:11px;text-align:center;letter-spacing:-0.1px">Bank</div>
<div class="a" style="left:155px;top:709px;width:54px;height:18px;background:#f0f0f0;border:1px solid #a0a0a0;border-top:none;"></div>
<div class="a " style="left:-18px;width:400px;top:712px;font-size:11px;line-height:11px;text-align:center;letter-spacing:-0.1px">Magazyn</div>
<div class="a" style="left:211px;top:709px;width:39px;height:18px;background:#f0f0f0;border:1px solid #a0a0a0;border-top:none;"></div>
<div class="a " style="left:30px;width:400px;top:712px;font-size:11px;line-height:11px;text-align:center;letter-spacing:-0.1px">VAT</div>
<div class="a" style="left:252px;top:709px;width:40px;height:18px;background:#f0f0f0;border:1px solid #a0a0a0;border-top:none;"></div>
<div class="a " style="left:72px;width:400px;top:712px;font-size:11px;line-height:11px;text-align:center;letter-spacing:-0.1px">Opis</div>
<div class="a" style="left:294px;top:709px;width:48px;height:18px;background:#f0f0f0;border:1px solid #a0a0a0;border-top:none;"></div>
<div class="a " style="left:118px;width:400px;top:712px;font-size:11px;line-height:11px;text-align:center;letter-spacing:-0.1px">Własne</div>
<div class="a" style="left:344px;top:709px;width:45px;height:18px;background:#f0f0f0;border:1px solid #a0a0a0;border-top:none;"></div>
<div class="a " style="left:166px;width:400px;top:712px;font-size:11px;line-height:11px;text-align:center;letter-spacing:-0.1px">Akcyza</div>
<div class="a" style="left:17px;top:734px;width:13px;height:13px;border:2px solid #636363;background:#fff;"></div>
<div class="a s" style="left:34px;top:736px;font-size:11px;line-height:11px;">Dodaj działanie</div>
<div class="a" style="left:491px;top:730px;width:273px;height:21px;background:#fff;border:1px solid #a0a0a0;border-radius:1px;"></div>
<div class="a s" style="left:495px;top:736px;font-size:11px;line-height:11px;">Wywołaj skutek magazynowy</div>
<svg class="a" style="left:747px;top:738px" width="10" height="5"><polygon points="0,0 10,0 5.0,5" fill="#000"/></svg>
<div class="a" style="left:772px;top:728px;width:75px;height:23px;background:#f0f0f0;border:1px solid #646464;box-shadow:inset 1px 1px 0 #fff, inset -1px -1px 0 #696969, inset -2px -2px 0 #a0a0a0;"></div>
<div class="a " style="left:609px;width:400px;top:734px;font-size:11px;line-height:11px;text-align:center;letter-spacing:-0.2px">Zapisz</div>
<div class="a" style="left:853px;top:728px;width:75px;height:23px;background:#f0f0f0;box-shadow:inset 1px 1px 0 #fff, inset -1px -1px 0 #696969, inset -2px -2px 0 #a0a0a0;"></div>
<div class="a " style="left:690px;width:400px;top:734px;font-size:11px;line-height:11px;text-align:center;letter-spacing:-0.2px">Anuluj</div>
<div class="a" style="left:934px;top:728px;width:75px;height:23px;background:#f0f0f0;box-shadow:inset 1px 1px 0 #fff, inset -1px -1px 0 #696969, inset -2px -2px 0 #a0a0a0;"></div>
<div class="a " style="left:771px;width:400px;top:734px;font-size:11px;line-height:11px;text-align:center;letter-spacing:-0.2px">Pomoc</div>
<svg class="a" style="left:1001px;top:750px" width="15" height="10"><path d="M1.5 9 L10 0.5 M6.5 9 L14.5 1 M11.5 9 L14.5 6" stroke="#fff" stroke-width="1.2" transform="translate(1,0)"/><path d="M1.5 9 L10 0.5 M6.5 9 L14.5 1 M11.5 9 L14.5 6" stroke="#8c8c8c" stroke-width="1.3"/></svg>
</body></html>
